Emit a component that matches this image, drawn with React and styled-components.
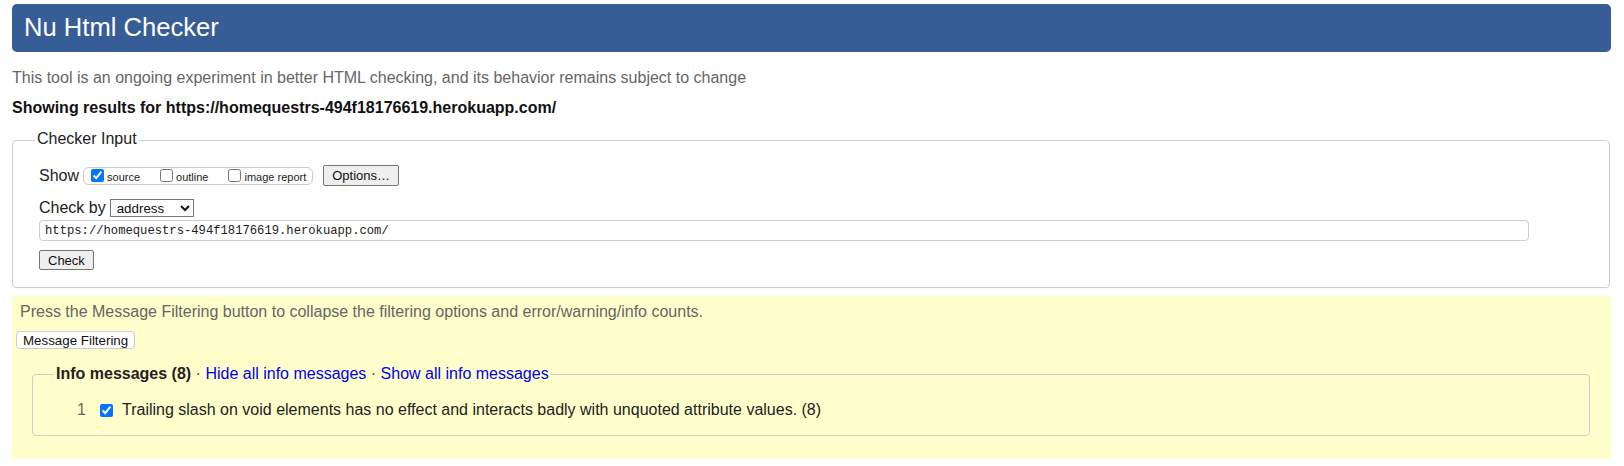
import React from "react";
import styled, { createGlobalStyle } from "styled-components";

const Global = createGlobalStyle`
  html, body { margin: 0; padding: 0; background: #fff; }
  body { font-family: "Liberation Sans", Arial, sans-serif; color: #222; }
  * { box-sizing: border-box; }
`;

const Page = styled.div`
  width: 1624px;
  padding: 4px 13px 8px 12px;
`;

const Header = styled.h1`
  margin: 0;
  height: 48px;
  background: #365d95;
  border-radius: 5px;
  color: #fff;
  font-weight: normal;
  font-size: 25.6px;
  line-height: 46px;
  padding: 0 12px 2px;
`;

const Intro = styled.p`
  margin: 16px 0 0;
  font-size: 16px;
  line-height: 20px;
  color: #666;
`;

const ResultsFor = styled.p`
  margin: 10px 0 0;
  font-size: 16px;
  font-weight: bold;
  line-height: 20px;
  color: #111;
`;

const InputFieldset = styled.fieldset`
  margin: 11px 1px 0 0;
  border: 1px solid #ccc;
  border-radius: 4px;
  padding: 14px 0 17px 22px;
  min-width: 0;
`;

const Legend = styled.legend`
  font-size: 16px;
  font-weight: ${(p) => (p.$bold ? "bold" : "normal")};
  line-height: 20px;
  padding: 0 2px ${(p) => p.$pb || "0"};
  color: #222;
`;

const Form = styled.div`
  padding-left: 4px;
  display: flex;
  flex-direction: column;
  align-items: flex-start;
`;

const Row = styled.div`
  display: flex;
  align-items: center;
  height: ${(p) => p.$h};
  margin-top: ${(p) => p.$mt || "0"};
`;

const RowLabel = styled.span`
  font-size: 16px;
  line-height: ${(p) => p.$lh};
  color: #222;
  margin-right: ${(p) => p.$mr};
`;

const ShowGroup = styled.span`
  display: inline-flex;
  align-items: center;
  gap: 20px;
  height: 18px;
  border: 1px solid #ccc;
  border-radius: 6px;
  padding: 0 6px 0 7px;
`;

const OptLabel = styled.label`
  display: inline-flex;
  align-items: center;
  gap: 3px;
  font-size: 11px;
  color: #222;
`;

const OptText = styled.span`
  line-height: 13px;
  padding-top: 4px;
`;

const Box = styled.input.attrs({ type: "checkbox" })`
  margin: 0;
  width: 13px;
  height: 13px;
`;

const Button = styled.button`
  font-family: "Liberation Sans", Arial, sans-serif;
  font-size: 13px;
  color: #111;
  background: #efefef;
  border: 1px solid #767676;
  border-radius: 2px;
  padding: 0 8px;
  height: ${(p) => p.$h || "20px"};
  margin-left: ${(p) => p.$ml || "0"};
  margin-top: ${(p) => p.$mt || "0"};
`;

const Select = styled.select`
  font-family: "Liberation Sans", Arial, sans-serif;
  font-size: 13.33px;
  width: 84px;
  height: 18px;
  padding: 0 0 0 2px;
  border: 1px solid #767676;
  border-radius: 0;
  background: #fff;
  color: #111;
`;

const UrlInput = styled.input`
  margin-top: 3px;
  width: 1490px;
  height: 21px;
  border: 1px solid #ccc;
  border-radius: 4px;
  padding: 0 5px;
  font-family: "Liberation Mono", "DejaVu Sans Mono", monospace;
  font-size: 12.2px;
  color: #222;
  background: #fff;
`;

const Results = styled.section`
  margin-top: 8px;
  background: #ffffcc;
  padding: 6px 5px 23px 4px;
`;

const Note = styled.p`
  margin: 0 0 0 4px;
  font-size: 16px;
  line-height: 20px;
  color: #666;
`;

const FilterButton = styled.button`
  display: block;
  margin-top: 9px;
  height: 18px;
  font-family: "Liberation Sans", Arial, sans-serif;
  font-size: 13.33px;
  color: #111;
  background: #fff;
  border: 1px solid #ccc;
  border-radius: 4px;
  padding: 0 6px;
`;

const InfoFieldset = styled.fieldset`
  margin: 15px 16px 0 16px;
  border: 1px solid #ccc;
  border-radius: 4px;
  padding: 16px 0 15px 21px;
  min-width: 0;
`;

const Sep = styled.span`
  font-weight: normal;
  color: #444;
`;

const Link = styled.a`
  font-weight: normal;
  color: #0000ee;
  text-decoration: none;
`;

const MsgRow = styled.div`
  display: flex;
  align-items: center;
  height: 20px;
  font-size: 16px;
  line-height: 20px;
`;

const Num = styled.span`
  width: 32px;
  text-align: right;
  color: #666;
  margin-right: 14px;
`;

const MsgText = styled.span`
  margin-left: 9px;
  color: #222;
`;

export default function App() {
  return (
    <Page>
      <Global />
      <Header>Nu Html Checker</Header>
      <Intro>
        This tool is an ongoing experiment in better HTML checking, and its behavior remains subject to change
      </Intro>
      <ResultsFor>Showing results for https://homequestrs-494f18176619.herokuapp.com/</ResultsFor>

      <InputFieldset>
        <Legend $pb="2px">Checker Input</Legend>
        <Form>
          <Row $h="21px">
            <RowLabel $lh="21px" $mr="4px">Show</RowLabel>
            <ShowGroup>
              <OptLabel>
                <Box defaultChecked />
                <OptText>source</OptText>
              </OptLabel>
              <OptLabel>
                <Box />
                <OptText>outline</OptText>
              </OptLabel>
              <OptLabel>
                <Box />
                <OptText>image report</OptText>
              </OptLabel>
            </ShowGroup>
            <Button $ml="10px" $h="21px">Options…</Button>
          </Row>
          <Row $h="18px" $mt="13px">
            <RowLabel $lh="18px" $mr="4px">Check by</RowLabel>
            <Select defaultValue="address">
              <option value="address">address</option>
              <option value="upload">file upload</option>
              <option value="text">text input</option>
            </Select>
          </Row>
          <UrlInput defaultValue="https://homequestrs-494f18176619.herokuapp.com/" />
          <Button $mt="9px" $h="20px">Check</Button>
        </Form>
      </InputFieldset>

      <Results>
        <Note>Press the Message Filtering button to collapse the filtering options and error/warning/info counts.</Note>
        <FilterButton>Message Filtering</FilterButton>
        <InfoFieldset>
          <Legend $bold>
            Info messages (8)<Sep> · </Sep>
            <Link href="#">Hide all info messages</Link>
            <Sep> · </Sep>
            <Link href="#">Show all info messages</Link>
          </Legend>
          <MsgRow>
            <Num>1</Num>
            <Box defaultChecked />
            <MsgText>Trailing slash on void elements has no effect and interacts badly with unquoted attribute values. (8)</MsgText>
          </MsgRow>
        </InfoFieldset>
      </Results>
    </Page>
  );
}
